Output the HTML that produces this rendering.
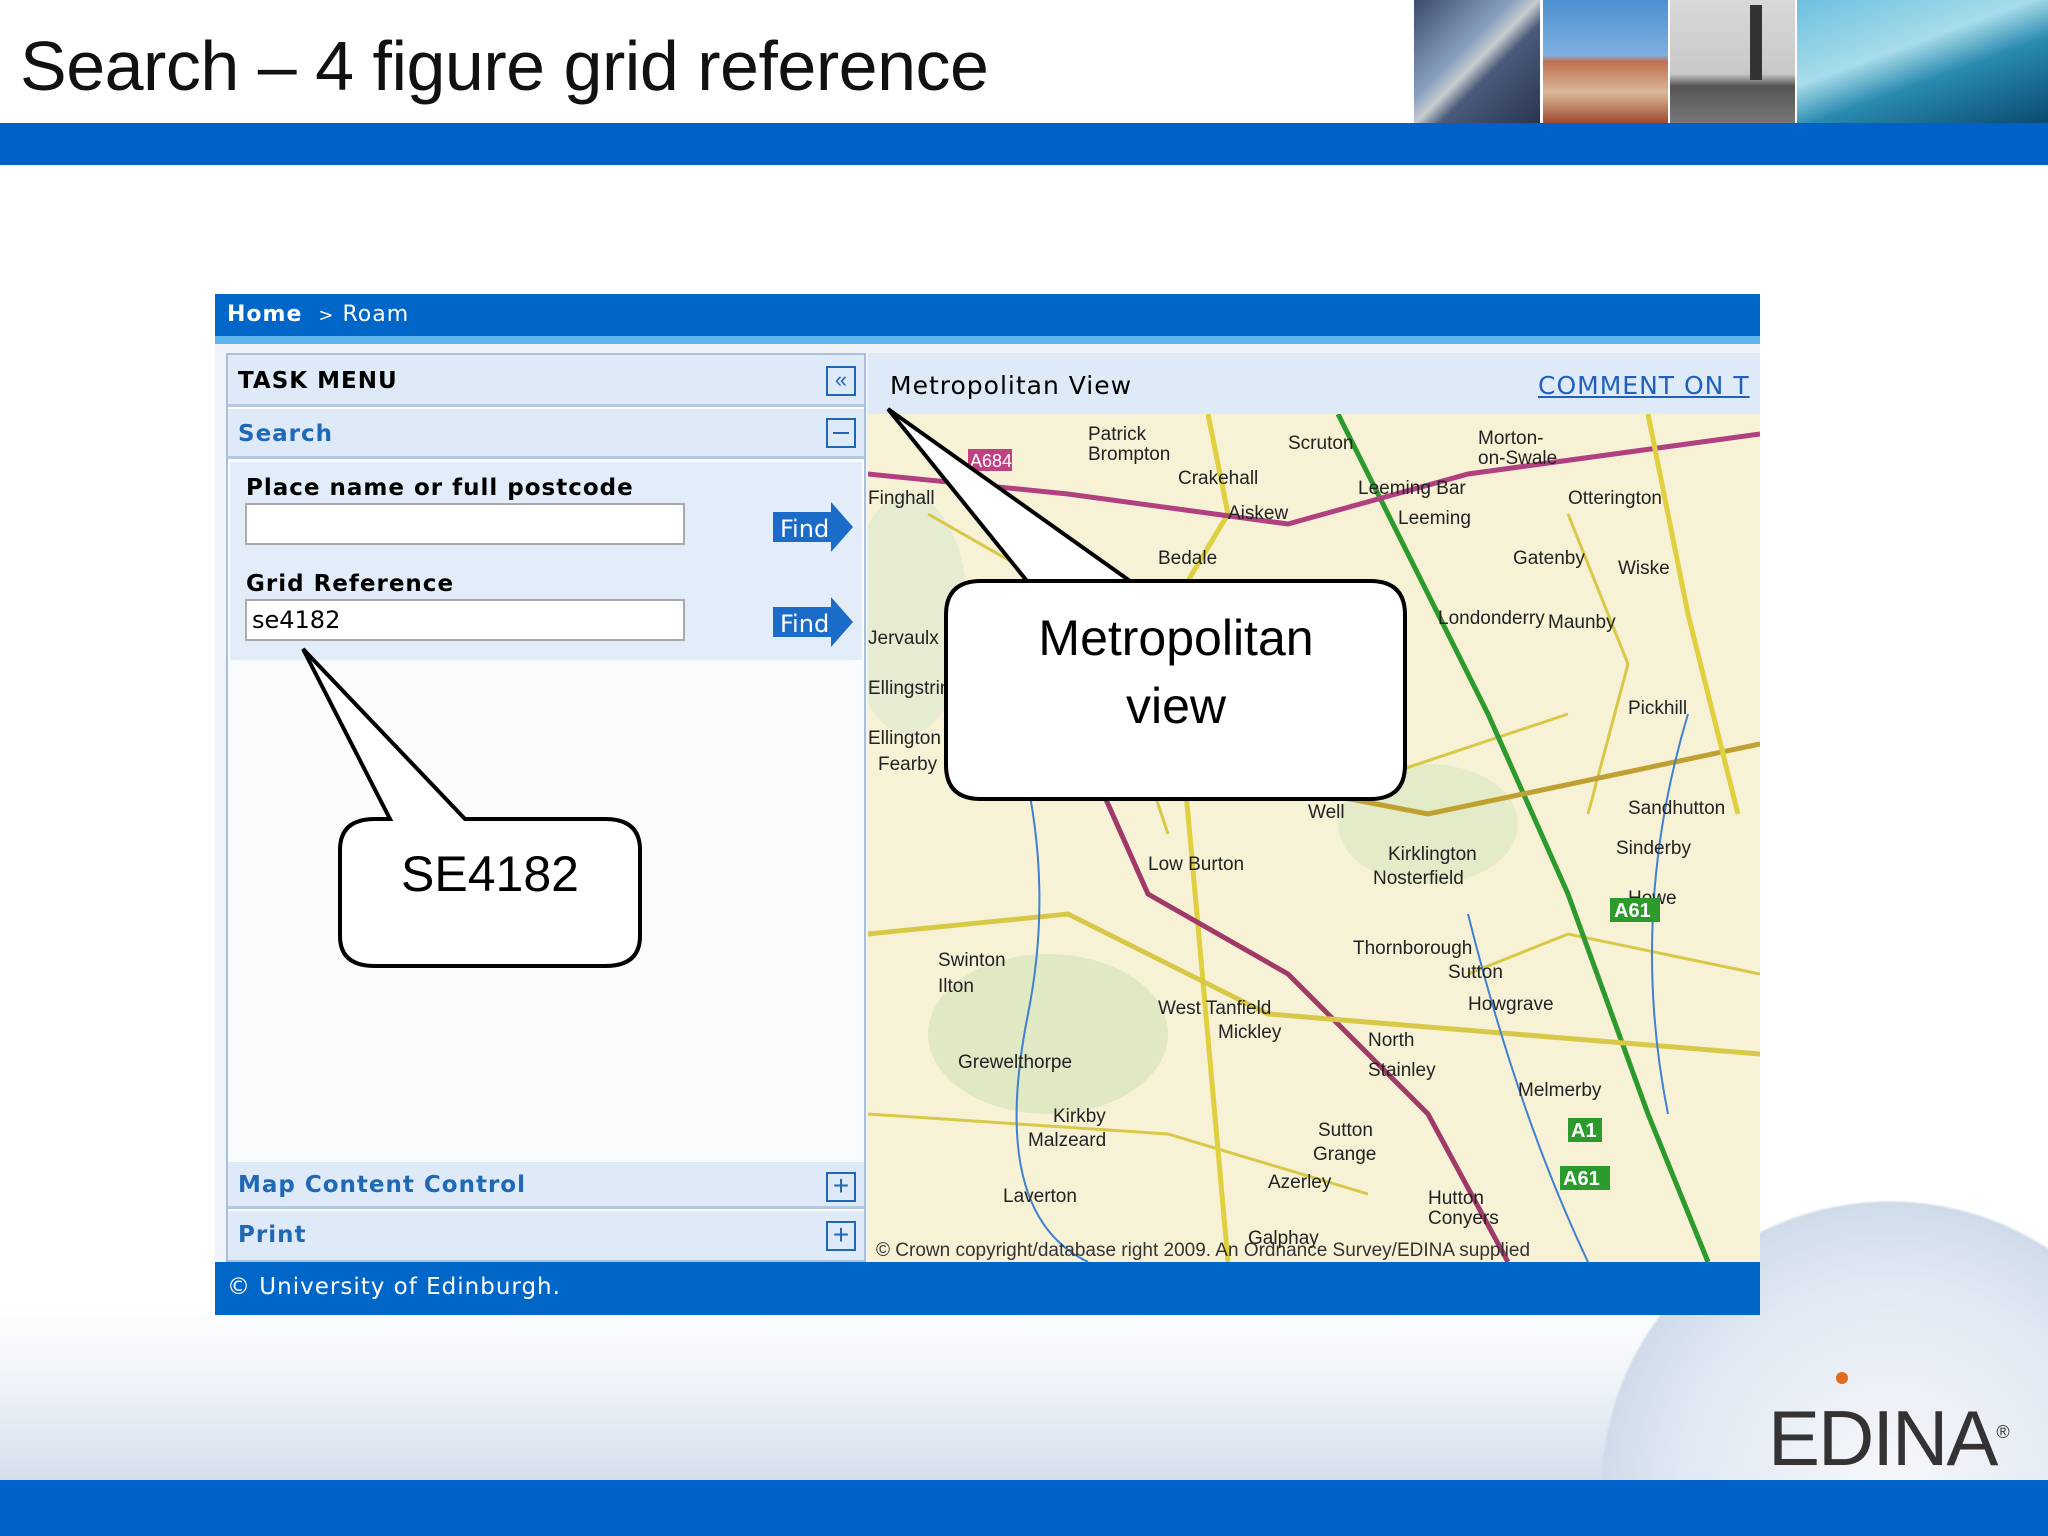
<!DOCTYPE html>
<html><head><meta charset="utf-8"><style>
*{margin:0;padding:0;box-sizing:border-box}
html,body{width:2048px;height:1536px;overflow:hidden}
body{position:relative;background:#fff;font-family:"Liberation Sans",sans-serif}
#w{position:absolute;left:0;top:0;width:2048px;height:1536px;overflow:hidden}
.abs{position:absolute}
.t{font-family:"DejaVu Sans",sans-serif}
</style></head><body><div id="w">
<div class="abs" style="left:20px;top:26px;font-size:70px;color:#111;letter-spacing:-0.5px">Search – 4 figure grid reference</div>
<div class="abs" style="left:1414px;top:0;width:126px;height:123px;background:linear-gradient(135deg,#3a4a6a,#8aa0c0 40%,#c8ccd0 50%,#4a5a7a 60%,#2a3550)"></div>
<div class="abs" style="left:1543px;top:0;width:125px;height:123px;background:linear-gradient(#4b8fd0 0,#7fb0e0 45%,#c07050 50%,#d8b898 75%,#a04a30)"></div>
<div class="abs" style="left:1670px;top:0;width:125px;height:123px;background:linear-gradient(#d8d8d8 0,#c8c8c8 60%,#555 70%,#777)"></div>
<div class="abs" style="left:1750px;top:5px;width:12px;height:75px;background:#333"></div>
<div class="abs" style="left:1797px;top:0;width:251px;height:123px;background:linear-gradient(160deg,#6cc0e0,#a8dcea 40%,#2a8ab0 60%,#0a4a70)"></div>
<div class="abs" style="left:0;top:123px;width:2048px;height:42px;background:#0062c8"></div>
<div class="abs" style="left:0;top:1300px;width:2048px;height:180px;background:linear-gradient(#fff,#eef2f8 50%,#d4deec)"></div>
<div class="abs" style="left:1600px;top:1200px;width:448px;height:280px;background:radial-gradient(circle 290px at 290px 290px,#f6f8fb 0,#e2e9f3 70%,#d0dbea 99%,rgba(255,255,255,0) 100%)"></div>
<div class="abs" style="left:0;top:1480px;width:2048px;height:56px;background:#0062c8"></div>
<div class="abs" style="left:1768px;top:1392px;font-size:78px;line-height:80px;color:#333;letter-spacing:-2px">EDINA<sup style="font-size:18px">®</sup></div>
<div class="abs" style="left:1836px;top:1372px;width:12px;height:12px;border-radius:50%;background:#e06a1a"></div>
<div class="abs" style="left:215px;top:294px;width:1545px;height:1021px;background:#f0f4fa"></div>
<div class="abs t" style="left:215px;top:294px;width:1545px;height:42px;background:#0066c8;color:#fff;font-size:22px;line-height:42px;padding-left:12px;letter-spacing:1px"><b>Home</b> &nbsp;<span style="font-size:18px">&gt;</span> Roam</div>
<div class="abs" style="left:215px;top:336px;width:1545px;height:8px;background:#5bb4ea"></div>
<div class="abs" style="left:226px;top:353px;width:640px;height:909px;background:#fafbfd;border:2px solid #a8c0dc"></div>
<div class="abs t" style="left:228px;top:355px;width:636px;height:52px;background:#deeaf8;border-bottom:3px solid #b4c8e0;font-size:23px;font-weight:bold;line-height:52px;padding-left:10px;letter-spacing:1px">TASK MENU</div>
<div class="abs" style="left:826px;top:366px;width:30px;height:30px;border:2px solid #1f68b8;color:#1f68b8;font-size:22px;line-height:24px;text-align:center">«</div>
<div class="abs t" style="left:228px;top:409px;width:636px;height:50px;background:#deeaf8;border-bottom:3px solid #b4c8e0;font-size:23px;font-weight:bold;line-height:50px;padding-left:10px;color:#1f68b8;letter-spacing:1px">Search</div>
<div class="abs" style="left:826px;top:418px;width:30px;height:30px;border:2px solid #1f68b8"><div style="margin:12px 5px;height:2px;background:#1f68b8"></div></div>
<div class="abs" style="left:230px;top:462px;width:632px;height:198px;background:#e2edf9"></div>
<div class="abs t" style="left:246px;top:475px;font-size:23px;font-weight:bold;letter-spacing:1px">Place name or full postcode</div>
<div class="abs" style="left:245px;top:503px;width:440px;height:42px;background:#fff;border:2px solid #aaa"></div>
<div class="abs t" style="left:246px;top:571px;font-size:23px;font-weight:bold;letter-spacing:1px">Grid Reference</div>
<div class="abs t" style="left:245px;top:599px;width:440px;height:42px;background:#fff;border:2px solid #aaa;font-size:24px;line-height:38px;padding-left:5px">se4182</div>
<svg class="abs" style="left:773px;top:502px" width="80" height="50"><path d="M0 10H58V0L80 25 58 50V40H0Z" fill="#1a6cc8"/><text x="7" y="35" fill="#fff" font-size="24" font-family="DejaVu Sans">Find</text></svg>
<svg class="abs" style="left:773px;top:597px" width="80" height="50"><path d="M0 10H58V0L80 25 58 50V40H0Z" fill="#1a6cc8"/><text x="7" y="35" fill="#fff" font-size="24" font-family="DejaVu Sans">Find</text></svg>
<div class="abs t" style="left:228px;top:1162px;width:636px;height:47px;background:#deeaf8;border-bottom:3px solid #b4c8e0;font-size:23px;font-weight:bold;line-height:47px;padding-left:10px;color:#1f68b8;letter-spacing:1px">Map Content Control</div>
<div class="abs" style="left:826px;top:1172px;width:30px;height:30px;border:2px solid #1f68b8;color:#1f68b8;font-size:28px;line-height:24px;text-align:center">+</div>
<div class="abs t" style="left:228px;top:1211px;width:636px;height:49px;background:#deeaf8;font-size:23px;font-weight:bold;line-height:49px;padding-left:10px;color:#1f68b8;letter-spacing:1px">Print</div>
<div class="abs" style="left:826px;top:1221px;width:30px;height:30px;border:2px solid #1f68b8;color:#1f68b8;font-size:28px;line-height:24px;text-align:center">+</div>
<div class="abs t" style="left:868px;top:353px;width:892px;height:61px;background:#deeaf8;font-size:25px;line-height:66px;padding-left:22px;letter-spacing:1px;overflow:hidden">Metropolitan View<span style="position:absolute;left:670px;color:#1f5fc0;text-decoration:underline;white-space:nowrap">COMMENT ON T</span></div>
<svg class="abs" style="left:868px;top:414px" width="892" height="848" font-family="Liberation Sans" font-size="19" fill="#222">
<rect width="892" height="848" fill="#f7f2d6"/>
<ellipse cx="180" cy="620" rx="120" ry="80" fill="#e0e8c4"/><ellipse cx="560" cy="410" rx="90" ry="60" fill="#e4ebc8"/><ellipse cx="40" cy="200" rx="60" ry="120" fill="#e6ecd2"/>
<g fill="none" stroke-width="3" stroke="#d8c848"><path d="M60 100 L200 180 L260 300 L300 420"/><path d="M400 300 L520 360 L700 300"/><path d="M600 560 L700 520 L892 560"/><path d="M0 700 L300 720 L500 780"/><path d="M700 100 L760 250 L720 400"/></g>
<g fill="none" stroke-width="5"><path d="M470 0 L620 300 L700 480 L780 700 L840 848" stroke="#2c9a2c"/><path d="M340 0 L360 100 L300 200 L320 400 L360 848" stroke="#e0d040"/><path d="M0 60 L200 80 L420 110 L600 60 L892 20" stroke="#b04080"/><path d="M200 300 L280 480 L420 560 L560 700 L640 848" stroke="#a03868"/><path d="M100 370 L300 350 L560 400 L892 330" stroke="#c0a030"/><path d="M780 0 L820 200 L870 400" stroke="#e0d040"/><path d="M0 520 L200 500 L400 600 L892 640" stroke="#d8c848"/></g>
<g fill="none" stroke="#4080d0" stroke-width="2"><path d="M100 200 Q200 400 160 600 T220 848"/><path d="M600 500 Q650 700 720 848"/><path d="M820 300 Q760 500 800 700"/></g>
<g><text x="220" y="26">Patrick</text><text x="220" y="46">Brompton</text><text x="310" y="70">Crakehall</text><text x="360" y="105">Aiskew</text><text x="290" y="150">Bedale</text><text x="420" y="35">Scruton</text><text x="490" y="80">Leeming Bar</text><text x="530" y="110">Leeming</text><text x="645" y="150">Gatenby</text><text x="570" y="210">Londonderry</text><text x="680" y="214">Maunby</text><text x="610" y="30">Morton-</text><text x="610" y="50">on-Swale</text><text x="700" y="90">Otterington</text><text x="750" y="160">Wiske</text><text x="760" y="300">Pickhill</text><text x="760" y="400">Sandhutton</text><text x="748" y="440">Sinderby</text><text x="760" y="490">Howe</text><text x="0" y="330">Ellington</text><text x="10" y="356">Fearby</text><text x="120" y="382">Masham</text><text x="280" y="456">Low Burton</text><text x="440" y="404">Well</text><text x="505" y="470">Nosterfield</text><text x="520" y="446">Kirklington</text><text x="485" y="540">Thornborough</text><text x="580" y="564">Sutton</text><text x="600" y="596">Howgrave</text><text x="70" y="552">Swinton</text><text x="70" y="578">Ilton</text><text x="290" y="600">West Tanfield</text><text x="350" y="624">Mickley</text><text x="500" y="632">North</text><text x="500" y="662">Stainley</text><text x="650" y="682">Melmerby</text><text x="90" y="654">Grewelthorpe</text><text x="185" y="708">Kirkby</text><text x="160" y="732">Malzeard</text><text x="450" y="722">Sutton</text><text x="445" y="746">Grange</text><text x="400" y="774">Azerley</text><text x="135" y="788">Laverton</text><text x="380" y="830">Galphay</text><text x="560" y="790">Hutton</text><text x="560" y="810">Conyers</text><text x="0" y="90">Finghall</text><text x="0" y="280">Ellingstring</text><text x="0" y="230">Jervaulx</text></g>
<rect x="100" y="35" width="44" height="22" fill="#c04080"/><text x="102" y="53" fill="#fff" font-size="18">A684</text>
<rect x="128" y="308" width="64" height="22" fill="#c04080"/><text x="131" y="326" fill="#fff" font-size="18">A6108</text>
<rect x="742" y="484" width="50" height="24" fill="#2c9a2c"/><text x="746" y="503" fill="#fff" font-size="20" font-weight="bold">A61</text>
<rect x="700" y="704" width="34" height="24" fill="#2c9a2c"/><text x="703" y="723" fill="#fff" font-size="20" font-weight="bold">A1</text>
<rect x="692" y="752" width="50" height="24" fill="#2c9a2c"/><text x="695" y="771" fill="#fff" font-size="20" font-weight="bold">A61</text>
<text x="8" y="842" font-size="19" fill="#333">© Crown copyright/database right 2009. An Ordnance Survey/EDINA supplied</text>
</svg>
<div class="abs t" style="left:215px;top:1262px;width:1545px;height:53px;background:#0066c8;color:#fff;font-size:23px;line-height:50px;padding-left:12px;letter-spacing:1px">© University of Edinburgh.</div>
<svg class="abs" style="left:0;top:0" width="2048" height="1536">
<path d="M988 581 L1130 581 L888 409 L1027 581 L1370 581 Q1405 581 1405 615 L1405 765 Q1405 799 1370 799 L981 799 Q946 799 946 765 L946 615 Q946 581 981 581Z" fill="#fff" stroke="#000" stroke-width="4"/>
<path d="M390 819 L303 649 L465 819 L605 819 Q640 819 640 850 L640 936 Q640 966 605 966 L375 966 Q340 966 340 936 L340 850 Q340 819 375 819Z" fill="#fff" stroke="#000" stroke-width="4"/>
<text x="1176" y="655" text-anchor="middle" font-size="50" font-family="Liberation Sans">Metropolitan</text>
<text x="1176" y="723" text-anchor="middle" font-size="50" font-family="Liberation Sans">view</text>
<text x="490" y="891" text-anchor="middle" font-size="50" font-family="Liberation Sans">SE4182</text>
</svg>
</div></body></html>
